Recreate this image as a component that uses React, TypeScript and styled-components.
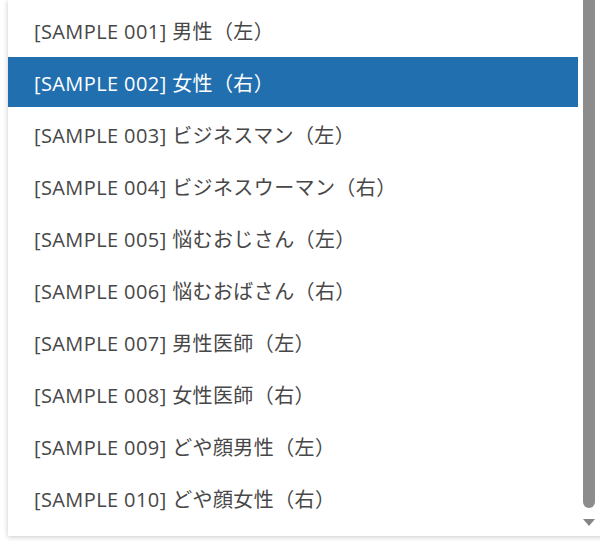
import React from "react";
import styled, { createGlobalStyle } from "styled-components";

const Global = createGlobalStyle`
  html, body { margin: 0; padding: 0; background: #ffffff; overflow: hidden; }
  body { font-family: "Open Sans", "Noto Sans CJK JP", sans-serif; }
`;

const Page = styled.div`
  width: 600px;
  height: 543px;
  padding-left: 8px;
  box-sizing: border-box;
  overflow: hidden;
`;

const Panel = styled.div`
  display: flex;
  width: 600px;
  height: 536px;
  background: #ffffff;
  box-shadow: 0 1px 5px rgba(0, 0, 0, 0.22);
`;

const List = styled.ul`
  list-style: none;
  margin: 0;
  padding: 5px 0 13px 0;
  width: 570px;
  flex: none;
  display: flex;
  flex-direction: column;
  gap: 2px;
  box-sizing: border-box;
`;

const Option = styled.li<{ $selected?: boolean }>`
  height: 50px;
  flex: none;
  display: flex;
  align-items: center;
  padding-left: 26px;
  font-size: 20px;
  letter-spacing: 0.4px;
  color: ${(p) => (p.$selected ? "#ffffff" : "#474747")};
  background: ${(p) => (p.$selected ? "#226fb0" : "transparent")};
  white-space: nowrap;
`;

const ScrollTrack = styled.div`
  display: flex;
  flex-direction: column;
  align-items: center;
  width: 12px;
  margin-left: 5px;
`;

const Thumb = styled.div`
  width: 12px;
  height: 508px;
  background: #8c8c8c;
  border-radius: 0 0 6px 6px;
`;

const Arrow = styled.div`
  margin-top: 11px;
  width: 0;
  height: 0;
  border-left: 6.5px solid transparent;
  border-right: 6.5px solid transparent;
  border-top: 7px solid #858585;
`;

const items = [
  "[SAMPLE 001] 男性（左）",
  "[SAMPLE 002] 女性（右）",
  "[SAMPLE 003] ビジネスマン（左）",
  "[SAMPLE 004] ビジネスウーマン（右）",
  "[SAMPLE 005] 悩むおじさん（左）",
  "[SAMPLE 006] 悩むおばさん（右）",
  "[SAMPLE 007] 男性医師（左）",
  "[SAMPLE 008] 女性医師（右）",
  "[SAMPLE 009] どや顔男性（左）",
  "[SAMPLE 010] どや顔女性（右）",
];

export default function App() {
  return (
    <Page>
      <Global />
      <Panel>
        <List>
          {items.map((t, i) => (
            <Option key={t} $selected={i === 1}>
              {t}
            </Option>
          ))}
        </List>
        <ScrollTrack>
          <Thumb />
          <Arrow />
        </ScrollTrack>
      </Panel>
    </Page>
  );
}
